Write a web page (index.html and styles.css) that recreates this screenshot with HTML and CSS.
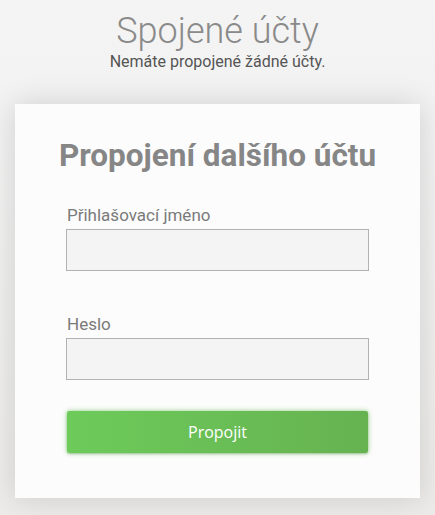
FILE: index.html
```html
<!DOCTYPE html>
<html lang="cs">
<head>
    <meta charset="UTF-8">
    <meta name="viewport" content="width=device-width, initial-scale=1.0">
    <title>Spojené účty</title>
    <link rel="stylesheet" href="styles.css">
</head>
<body>
    <div class="page">
        <div class="header">
            <h1>Spojené účty</h1>
            <p>Nemáte propojené žádné účty.</p>
        </div>

        <div class="card">
            <h2>Propojení dalšího účtu</h2>
            <form class="link-form">
                <label for="login">Přihlašovací jméno</label>
                <input type="text" id="login">

                <label for="password" class="second">Heslo</label>
                <input type="password" id="password">

                <button type="button">Propojit</button>
            </form>
        </div>
    </div>
</body>
</html>
```

FILE: styles.css
```css
* {
    box-sizing: border-box;
    margin: 0;
    padding: 0;
}

body {
    font-family: Roboto, 'Liberation Sans', sans-serif;
    background: linear-gradient(to bottom, #f4f4f4, #ecebea);
    min-height: 100vh;
    color: #777;
}

.page {
    padding: 10px 15px 18px;
}

.header {
    text-align: center;
}

.header h1 {
    font-weight: 300;
    font-size: 36px;
    line-height: 42px;
    color: #8a8a8a;
}

.header p {
    font-size: 16px;
    line-height: 20px;
    color: #555;
}

.card {
    margin-top: 32px;
    background: #fcfcfc;
    box-shadow: 0 0 28px rgba(0, 0, 0, 0.14);
    padding: 32px 51px 45px;
}

.card h2 {
    text-align: center;
    font-size: 31.5px;
    font-weight: 700;
    line-height: 40px;
    color: #868686;
    margin: 0 -30px 28px;
}

.link-form {
    display: flex;
    flex-direction: column;
}

.link-form label {
    font-size: 17px;
    line-height: 22px;
    color: #7a7a7a;
    margin-left: 1px;
    margin-bottom: 3px;
}

.link-form label.second {
    margin-top: 42px;
}

.link-form input {
    height: 42px;
    background: #f4f4f4;
    border: 1px solid #b2b2b2;
    font-size: 16px;
    padding: 0 8px;
    outline: none;
}

.link-form button {
    margin: 31px 1px 0;
    height: 42px;
    border: none;
    border-radius: 2px;
    background: linear-gradient(to right, #6dcb5a, #66b251);
    box-shadow: 0 0 5px rgba(100, 190, 80, 0.7), 0 1px 2px rgba(0, 0, 0, 0.2);
    color: #fff;
    font-family: 'Open Sans', sans-serif;
    font-size: 16px;
    cursor: pointer;
}
```
